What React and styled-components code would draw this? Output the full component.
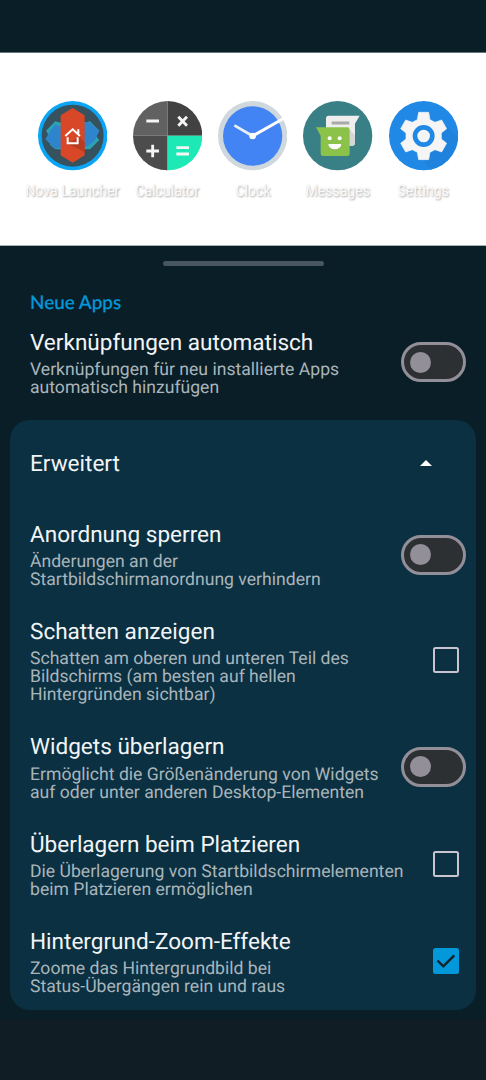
import React from 'react';
import styled, {createGlobalStyle} from 'styled-components';

const settings = [
    {
        title: 'Anordnung sperren',
        summary: ['Änderungen an der', 'Startbildschirmanordnung verhindern'],
        control: 'switch'
    },
    {
        title: 'Schatten anzeigen',
        summary: ['Schatten am oberen und unteren Teil des', 'Bildschirms (am besten auf hellen', 'Hintergründen sichtbar)'],
        control: 'checkbox'
    },
    {
        title: 'Widgets überlagern',
        summary: ['Ermöglicht die Größenänderung von Widgets', 'auf oder unter anderen Desktop-Elementen'],
        control: 'switch'
    },
    {
        title: 'Überlagern beim Platzieren',
        summary: ['Die Überlagerung von Startbildschirmelementen', 'beim Platzieren ermöglichen'],
        control: 'checkbox'
    },
    {
        title: 'Hintergrund-Zoom-Effekte',
        summary: ['Zoome das Hintergrundbild bei', 'Status-Übergängen rein und raus'],
        control: 'checkbox',
        checked: true
    }
];

const NovaIcon = () => (
    <AppIcon viewBox="52 33 208 208">
        <circle cx="156" cy="137" r="104" fill="#0aa5f5" />
        <circle cx="156" cy="137" r="93" fill="#37525f" />
        <path d="M76 122L104 94L126 100V178H104L88 164L92 148Z" fill="#2aa3b4" />
        <path d="M236 122L208 94L186 100V178H208L236 150L224 136Z" fill="#2aa3b4" />
        <path d="M74 148L90 120L104 104L126 112V172L104 176Z" fill="#2e84cd" />
        <path d="M186 96H204L224 112L236 122L222 152L204 166L186 174Z" fill="#2e84cd" />
        <path d="M156 54L192 76V196L156 218L120 196V76Z" fill="#d84727" />
        <path d="M176 140L192 156V188L174 176L140 162Z" fill="#b93c22" />
        <path d="M134 138L156 118L178 138M173 133V118M141 142V160H171V142" fill="none" stroke="#fff" strokeWidth="6" />
    </AppIcon>
);

const CalculatorIcon = () => (
    <AppIcon viewBox="22 33 208 208">
        <path d="M126 137V33A104 104 0 0 0 22 137Z" fill="#616161" />
        <path d="M126 137V33A104 104 0 0 1 230 137Z" fill="#424242" />
        <path d="M126 137H22A104 104 0 0 0 126 241Z" fill="#4c4c4c" />
        <path d="M126 137H230A104 104 0 0 1 126 241Z" fill="#1de9b6" />
        <path d="M62 93H100M158 80L184 107M184 80L158 107M62 183H100M81 164V202M152 173H190M152 192H190" stroke="#f5f5f5" strokeWidth="8.500" />
    </AppIcon>
);

const ClockIcon = () => (
    <AppIcon viewBox="23 33 208 208">
        <circle cx="127" cy="137" r="104" fill="#cfd8dc" />
        <circle cx="127" cy="138" r="89" fill="#4384f4" />
        <path d="M72 106L127 138" stroke="#eceff1" strokeWidth="8" />
        <path d="M127 138L217 87" stroke="#fff" strokeWidth="9" />
        <circle cx="127" cy="138" r="10" fill="#fff" />
    </AppIcon>
);

const MessagesIcon = () => (
    <AppIcon viewBox="25 33 208 208">
        <circle cx="129" cy="137" r="104" fill="#387f86" />
        <path d="M102 77H195L181 101V160Q181 167 174 167H102Q94 167 94 160V85Q94 77 102 77Z" fill="#eee" />
        <path d="M152 114L165 118L181 136V160Q181 167 174 167H150Z" fill="#d3d7d7" />
        <path d="M111 99H164" stroke="#a9a9a9" strokeWidth="9" />
        <path d="M64 112H158Q165 112 165 119V190Q165 198 158 198H85Q78 198 78 190V137Z" fill="#8bc34a" />
        <circle cx="105" cy="145" r="6" fill="#fff" />
        <circle cx="135" cy="145" r="6" fill="#fff" />
        <path d="M101 162H140A19.500 16 0 0 1 101 162Z" fill="#fff" />
    </AppIcon>
);

const SettingsIcon = () => (
    <AppIcon viewBox="26 33 208 208">
        <circle cx="130" cy="137" r="104" fill="#2088e5" />
        <path d="M196 105L231 142A104 104 0 0 1 150 239L130 208Z" fill="#1f82dc" />
        <path
            d="M115 67H145L149 89L164 97L184 90L199 116L183 129V147L199 160L184 186L164 179L149 187L145 209H115L111 187L96 179L76 186L61 160L77 147V129L61 116L76 90L96 97L111 89Z"
            fill="#f5f5f5"
            stroke="#f5f5f5"
            strokeWidth="2"
            strokeLinejoin="round"
        />
        <circle cx="130" cy="138" r="26" fill="none" stroke="#2088e5" strokeWidth="14" />
    </AppIcon>
);

const apps = [
    {name: 'Nova Launcher', Icon: NovaIcon},
    {name: 'Calculator', Icon: CalculatorIcon},
    {name: 'Clock', Icon: ClockIcon},
    {name: 'Messages', Icon: MessagesIcon},
    {name: 'Settings', Icon: SettingsIcon}
];

const Preference = ({title, summary, control, checked}) => (
    <Row>
        <RowText>
            <Title>{title}</Title>
            <Summary>
                {summary.map(line => <span key={line}>{line}</span>)}
            </Summary>
        </RowText>
        {control === 'switch' ? (
            <Switch role="switch" aria-checked="false"><Knob /></Switch>
        ) : (
            <Checkbox role="checkbox" aria-checked={!!checked} $checked={checked}>
                {checked && (
                    <CheckMark viewBox="0 0 26 26">
                        <path d="M4.500 12.500L10.300 18.300L21.300 7.300" fill="none" stroke="#14222b" strokeWidth="2.400" />
                    </CheckMark>
                )}
            </Checkbox>
        )}
    </Row>
);

const App = () => {
    return (
        <Screen>
            <GlobalStyle />
            <StatusBar />
            <Preview>
                {apps.map(({name, Icon}) => (
                    <AppShortcut key={name}>
                        <Icon />
                        <AppLabel>{name}</AppLabel>
                    </AppShortcut>
                ))}
            </Preview>
            <Sheet>
                <Handle />
                <SectionTitle>Neue Apps</SectionTitle>
                <Preference
                    title="Verknüpfungen automatisch"
                    summary={['Verknüpfungen für neu installierte Apps', 'automatisch hinzufügen']}
                    control="switch"
                />
                <Card>
                    <CardHeader>
                        <Title>Erweitert</Title>
                        <Arrow viewBox="0 0 12 6"><path d="M0 6L6 0L12 6Z" fill="#fff" /></Arrow>
                    </CardHeader>
                    {settings.map(item => <Preference key={item.title} {...item} />)}
                </Card>
            </Sheet>
            <NavigationBar />
        </Screen>
    );
}

export default App;

const GlobalStyle = createGlobalStyle`
  body {
      margin: 0;
      background: #0a1e27;
  }
`;

const Screen = styled.div`
  display: flex;
  flex-direction: column;
  width: 486px;
  height: 1080px;
  overflow: hidden;
  background: #0a1e27;
  font-family: Roboto, "Liberation Sans", sans-serif;
  text-rendering: geometricPrecision;
`;

const StatusBar = styled.div`
  flex: none;
  height: 52px;
`;

const Preview = styled.div`
  display: flex;
  flex: none;
  box-sizing: border-box;
  height: 194px;
  padding: 48.4px 0 0 19.8px;
  background: #fff;
  border-top: 1px solid #64777c;
  border-bottom: 1px solid #a3b3b0;
`;

const AppShortcut = styled.div`
  display: flex;
  flex: none;
  flex-direction: column;
  align-items: center;
  width: 85.4px;

  &:first-child {
      width: 104.8px;
  }
`;

const AppIcon = styled.svg`
  display: block;
  width: 69.3px;
  height: 69.3px;
`;

const AppLabel = styled.span`
  margin-top: 10.3px;
  color: #fafafa;
  font-size: 16px;
  line-height: 20px;
  white-space: nowrap;
  text-shadow: 1px 1px 2px rgba(0, 0, 0, 0.35);
  transform: scaleX(0.88);
`;

const Sheet = styled.div`
  flex: none;
  height: 773px;
`;

const Handle = styled.div`
  width: 161px;
  height: 5px;
  margin: 0 auto;
  border-radius: 3px;
  background: #47565f;
  transform: translateY(15px);
`;

const SectionTitle = styled.h2`
  margin: 0;
  padding: 41px 30px 0;
  color: #0398d9;
  font-family: Lato, sans-serif;
  font-size: 18.9px;
  font-weight: 500;
  line-height: 22px;
  -webkit-text-stroke: 0.2px #0398d9;
`;

const Row = styled.div`
  display: flex;
  align-items: center;
  justify-content: space-between;
  box-sizing: border-box;
  padding: 13.5px 20px 14.5px 30px;
`;

const RowText = styled.div`
  padding-top: 2px;
`;

const Title = styled.div`
  color: #f2f5f7;
  font-size: 22.55px;
  line-height: 26px;
  white-space: nowrap;
`;

const Summary = styled.div`
  margin-top: 5.2px;
  color: #a9b5bb;
  font-size: 17.6px;
  line-height: 18px;
  white-space: nowrap;

  span {
      display: block;
  }
`;

const Switch = styled.div`
  display: flex;
  flex: none;
  align-items: center;
  box-sizing: border-box;
  width: 65px;
  height: 40px;
  padding-left: 6.4px;
  border: 3px solid #938f99;
  border-radius: 20px;
  background: #2d3033;
`;

const Knob = styled.div`
  width: 21px;
  height: 21px;
  border-radius: 50%;
  background: #938f99;
`;

const Checkbox = styled.div`
  flex: none;
  box-sizing: border-box;
  width: 26px;
  height: 26px;
  margin: 0 7px 1px 0;
  border: ${props => props.$checked ? 'none' : '2px solid #cac4d0'};
  border-radius: 2.5px;
  background: ${props => props.$checked ? '#0398d9' : 'transparent'};
`;

const CheckMark = styled.svg`
  display: block;
  width: 26px;
  height: 26px;
`;

const Card = styled.section`
  margin: 8.8px 10px 0;
  border-radius: 20px;
  background: #0b3041;

  ${Row} {
      padding: 14px 10px 14px 20px;
  }
`;

const CardHeader = styled.div`
  display: flex;
  align-items: center;
  justify-content: space-between;
  box-sizing: border-box;
  height: 86px;
  padding: 0 44px 0 20px;

  ${Title} {
      padding-top: 3px;
  }
`;

const Arrow = styled.svg`
  width: 12px;
  height: 6px;
`;

const NavigationBar = styled.div`
  flex: 1;
  background: #111d24;
`;
